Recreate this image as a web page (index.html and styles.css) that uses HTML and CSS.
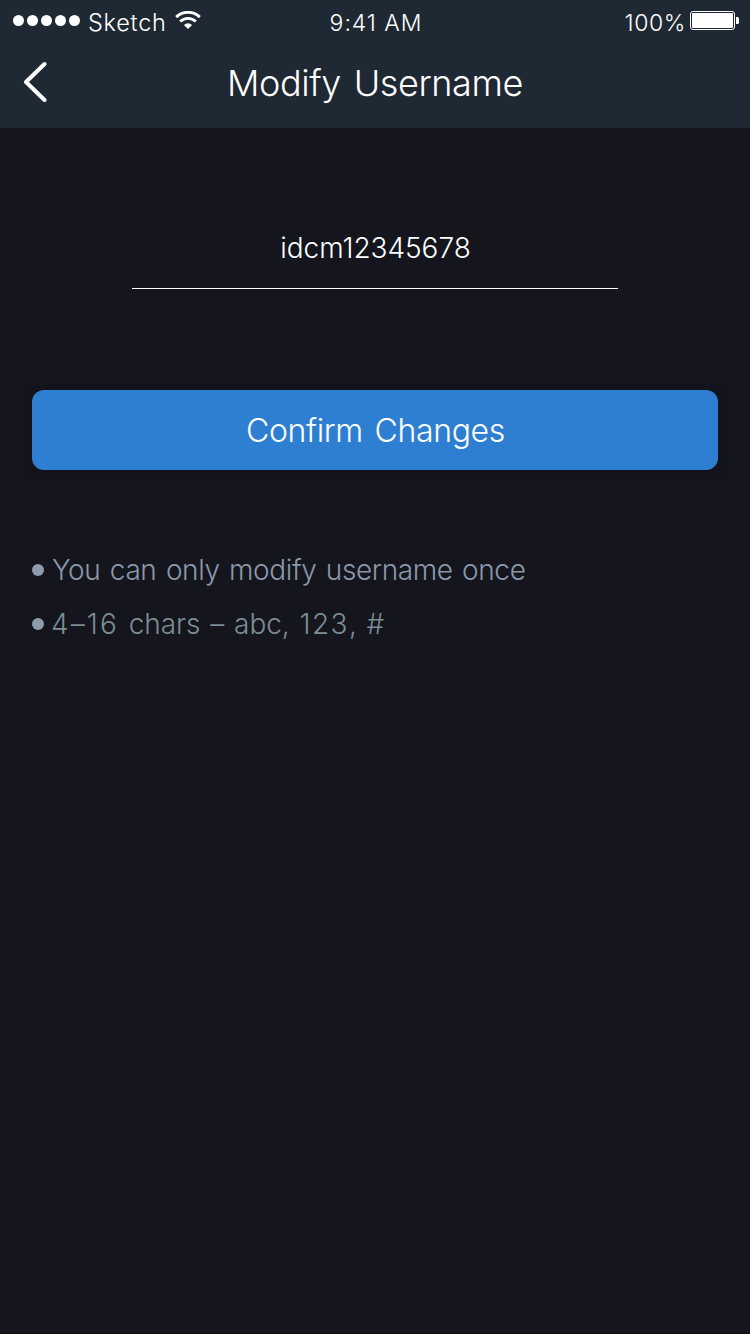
FILE: index.html
```html
<!DOCTYPE html>
<html lang="en">
<head>
<meta charset="utf-8">
<title>Modify Username</title>
<link rel="stylesheet" href="styles.css">
</head>
<body>
<div class="screen">
  <header class="header">
    <div class="status">
      <div class="status-left">
        <span class="signal"><i class="dot"></i><i class="dot"></i><i class="dot"></i><i class="dot"></i><i class="dot"></i></span>
        <span class="carrier">Sketch</span>
        <svg class="wifi" width="26" height="19" viewBox="0 0 26 19" fill="none" stroke="#fff" stroke-width="2.9">
          <path d="M1.200 6.100A17 17 0 0 1 24.800 6.100"/>
          <path d="M5.200 10.500A11.200 11.200 0 0 1 20.800 10.500"/>
          <path d="M13 18L8.900 13.900A6.300 6.300 0 0 1 17.100 13.900Z" fill="#fff" stroke="none"/>
        </svg>
      </div>
      <span class="time">9:41 AM</span>
      <div class="status-right">
        <span class="percent">100%</span>
        <svg class="battery" width="49" height="19" viewBox="0 0 49 19">
          <rect x=".5" y=".5" width="44" height="18" rx="2.5" fill="none" stroke="#fff"/>
          <rect x="2" y="2" width="41" height="15" rx="1" fill="#fff"/>
          <path d="M46 6h1.500q1.500 0 1.500 1.500v4q0 1.500-1.500 1.500H46z" fill="#fff"/>
        </svg>
      </div>
    </div>
    <nav class="nav">
      <svg class="back" width="24" height="42" viewBox="0 0 24 42" fill="none" stroke="#fff" stroke-width="4" stroke-linecap="round" stroke-linejoin="round"><path d="M21.500 3L3 21L21.500 39"/></svg>
      <h1 class="title">Modify Username</h1>
    </nav>
  </header>
  <main class="content">
    <div class="field"><span class="username">idcm12345678</span></div>
    <button class="confirm"><span class="confirm-label">Confirm Changes</span></button>
    <ul class="notes">
      <li class="note"><span class="note-text">You can only modify username once</span></li>
      <li class="note note-rule"><span class="note-text"><span class="range">4–16</span> chars – abc, <span class="digits">123</span>, #</span></li>
    </ul>
  </main>
</div>
</body>
</html>
```
FILE: styles.css
```css
* { box-sizing: border-box; }
body { margin: 0; background: #14151d; font-family: Inter, "Liberation Sans", sans-serif; color: #fff; }
.screen { width: 750px; height: 1334px; background: #14151d; border-bottom: 1px solid #120b13; }
.header { height: 128px; background: #1f2934; }
.status { display: grid; grid-template-columns: 1fr auto 1fr; height: 40px; padding: 0 11px 0 13px; font-size: 23.5px; font-weight: 300; line-height: 46px; }
.status-left { display: flex; }
.signal { display: flex; gap: 3px; margin-top: 15px; }
.dot { width: 11px; height: 11px; border-radius: 50%; background: #fff; }
.carrier { margin-left: 8px; letter-spacing: .75px; }
.wifi { margin: 11px 0 0 8px; }
.time { font-size: 23px; letter-spacing: .95px; }
.status-right { display: flex; justify-content: flex-end; }
.percent { font-size: 23px; letter-spacing: .6px; margin-right: 4px; }
.battery { margin-top: 11px; }
.nav { display: grid; grid-template-columns: 60px 1fr 60px; height: 88px; padding: 0 23px; }
.back { margin-top: 21px; }
.title { margin: 0; font-size: 36px; font-weight: 300; line-height: 86px; text-align: center; letter-spacing: -.4px; word-spacing: 3px; white-space: nowrap; }
.content { padding: 88px 32px 0; }
.field { width: 486px; height: 73px; margin: 0 auto; padding-left: 1px; border-bottom: 1px solid #fff; text-align: center; font-size: 28px; font-weight: 300; line-height: 65px; letter-spacing: -.05px; }
.confirm { display: block; width: 686px; height: 80px; margin: 101px 0 0; padding: 0 0 0 1px; border: 0; border-radius: 12px; background: #2e7fd1; box-shadow: 0 2px 12px rgba(16, 17, 23, .6); color: #fff; font: 300 32px/82px Inter, "Liberation Sans", sans-serif; letter-spacing: -.35px; word-spacing: 3px; text-align: center; }
.notes { margin: 73px 0 0; padding: 0; list-style: none; color: #8b98a9; font-size: 28px; font-weight: 300; line-height: 55px; }
.note { display: flex; align-items: center; gap: 8px; height: 54px; white-space: nowrap; letter-spacing: -.4px; word-spacing: 2px; }
.note::before { content: ""; width: 12px; height: 12px; border-radius: 50%; background: #8f9cae; }
.note-text { height: 54px; }
.note-rule .note-text { color: #7c8d96; letter-spacing: -.05px; word-spacing: 2px; }
.range { margin-left: -1px; letter-spacing: 2.1px; }
.digits { letter-spacing: 1.4px; }
```
